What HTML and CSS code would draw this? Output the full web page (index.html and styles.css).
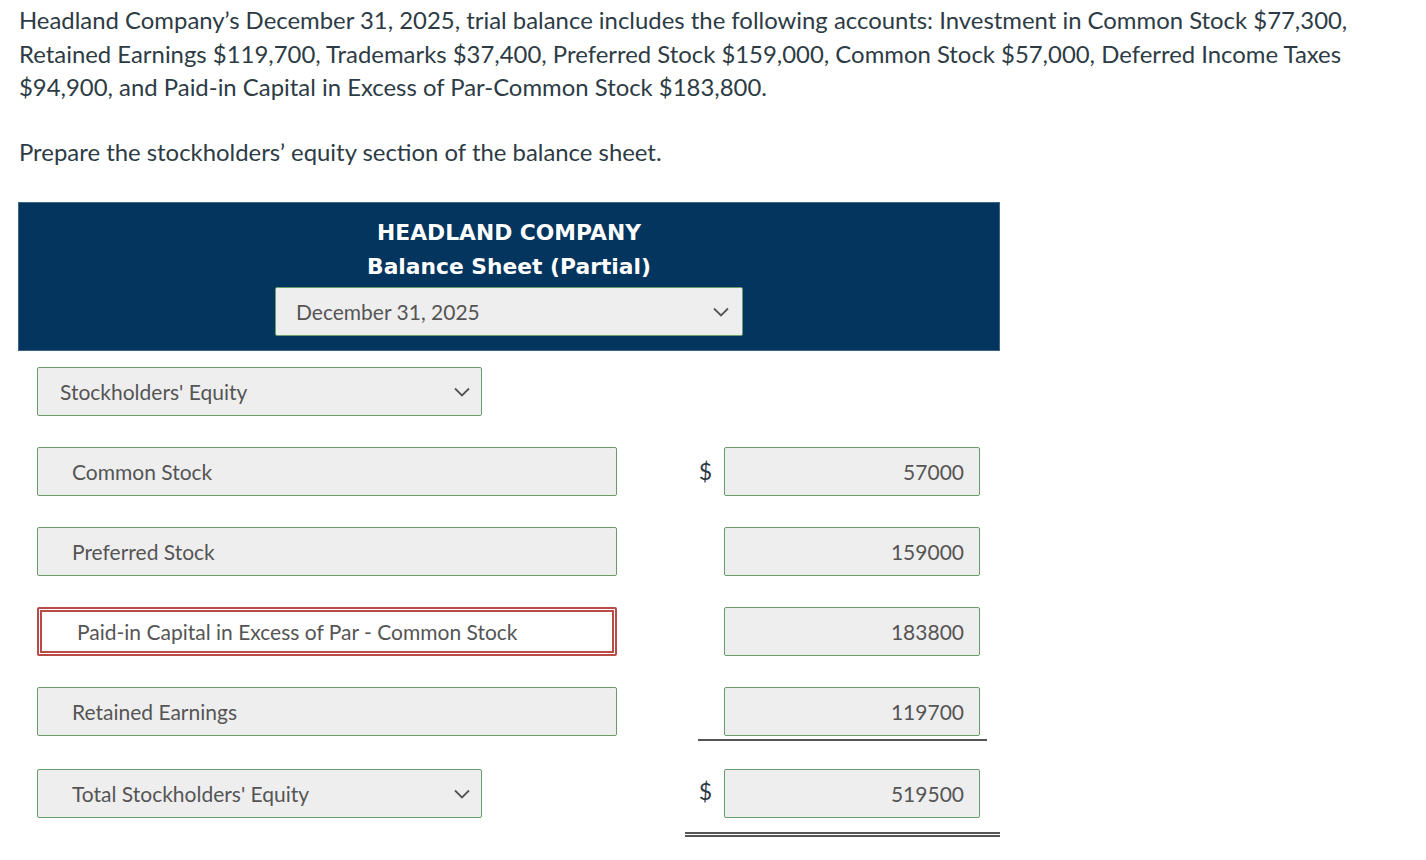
FILE: index.html
```html
<!DOCTYPE html>
<html lang="en">
<head>
<meta charset="utf-8">
<title>Headland Company</title>
<link rel="stylesheet" href="styles.css">
</head>
<body>
<div class="page">
  <p class="prompt">Headland Company’s December 31, 2025, trial balance includes the following accounts: Investment in Common Stock $77,300,<br>Retained Earnings $119,700, Trademarks $37,400, Preferred Stock $159,000, Common Stock $57,000, Deferred Income Taxes<br>$94,900, and Paid-in Capital in Excess of Par-Common Stock $183,800.</p>
  <p class="prompt">Prepare the stockholders’ equity section of the balance sheet.</p>

  <div class="sheet">
    <div class="sheet-header">
      <div class="title">HEADLAND COMPANY</div>
      <div class="title">Balance Sheet (Partial)</div>
      <div class="select date-select">
        <span>December 31, 2025</span>
        <svg class="chev" width="16" height="10" viewBox="0 0 16 10"><path d="M1 1.5 L8 8.5 L15 1.5" fill="none" stroke="#555" stroke-width="1.8"/></svg>
      </div>
    </div>

    <div class="rows">
      <div class="select section-select">
        <span>Stockholders' Equity</span>
        <svg class="chev" width="16" height="10" viewBox="0 0 16 10"><path d="M1 1.5 L8 8.5 L15 1.5" fill="none" stroke="#555" stroke-width="1.8"/></svg>
      </div>
      <div></div>
      <div></div>

      <div class="field label">Common Stock</div>
      <div class="dollar">$</div>
      <div class="field amount">57000</div>

      <div class="field label">Preferred Stock</div>
      <div class="dollar"></div>
      <div class="field amount">159000</div>

      <div class="field label wrong">Paid-in Capital in Excess of Par - Common Stock</div>
      <div class="dollar"></div>
      <div class="field amount">183800</div>

      <div class="field label">Retained Earnings</div>
      <div class="dollar"></div>
      <div class="underline single"><div class="field amount">119700</div></div>

      <div class="select section-select total">
        <span>Total Stockholders' Equity</span>
        <svg class="chev" width="16" height="10" viewBox="0 0 16 10"><path d="M1 1.5 L8 8.5 L15 1.5" fill="none" stroke="#555" stroke-width="1.8"/></svg>
      </div>
      <div class="dollar">$</div>
      <div class="underline double"><div class="field amount">519500</div></div>
    </div>
  </div>
</div>
</body>
</html>
```

FILE: styles.css
```css
html, body {
  margin: 0;
  padding: 0;
  background: #ffffff;
}

body {
  font-family: "Lato", "Open Sans", "Liberation Sans", sans-serif;
  color: #2d3b45;
}

.page {
  padding: 3px 18px 0 19px;
}

.prompt {
  margin: 0 0 31px 0;
  font-size: 23.9px;
  line-height: 33.5px;
  white-space: nowrap;
}

.prompt + .prompt {
  margin-bottom: 34px;
}

.sheet {
  width: 982px;
  margin-left: -1px;
}

.sheet-header {
  background: #03355f;
  border: 1px solid #3e6588;
  padding: 13px 0 14px 0;
  display: flex;
  flex-direction: column;
  align-items: center;
}

.title {
  font-family: "DejaVu Sans", "Verdana", sans-serif;
  font-weight: bold;
  color: #ffffff;
  font-size: 21.8px;
  line-height: 34px;
}

.select,
.field {
  box-sizing: border-box;
  height: 49px;
  background: #eeeeee;
  border: 1px solid #699c69;
  border-radius: 2px;
  font-size: 21px;
  color: #555555;
  display: flex;
  align-items: center;
}

.select {
  justify-content: space-between;
}

.date-select {
  width: 468px;
  margin-top: 3px;
  padding: 0 13px 0 20px;
}

.section-select {
  width: 445px;
  padding: 0 11px 0 22px;
}

.section-select.total {
  padding-left: 34px;
}

.chev {
  display: block;
  flex: none;
}

.rows {
  display: grid;
  grid-template-columns: 580px 107px 256px;
  row-gap: 31px;
  padding: 16px 0 0 19px;
}

.field.label {
  padding-left: 34px;
}

.field.label.wrong {
  background: #ffffff;
  border: 5px double #b84a48;
  padding-left: 35px;
}

.dollar {
  font-size: 23px;
  text-align: right;
  padding-right: 12px;
  display: flex;
  align-items: center;
  justify-content: flex-end;
  height: 47px;
}

.field.amount {
  justify-content: flex-end;
  padding-right: 15px;
}

.underline.single {
  margin: 0 -7px -5px -26px;
  padding: 0 7px 3px 26px;
  border-bottom: 2px solid #555555;
}

.total {
  margin-top: 2px;
}

.underline.double {
  margin: 2px -20px 0 -39px;
  padding: 0 20px 14px 39px;
  border-bottom: 5px double #555555;
}
```
